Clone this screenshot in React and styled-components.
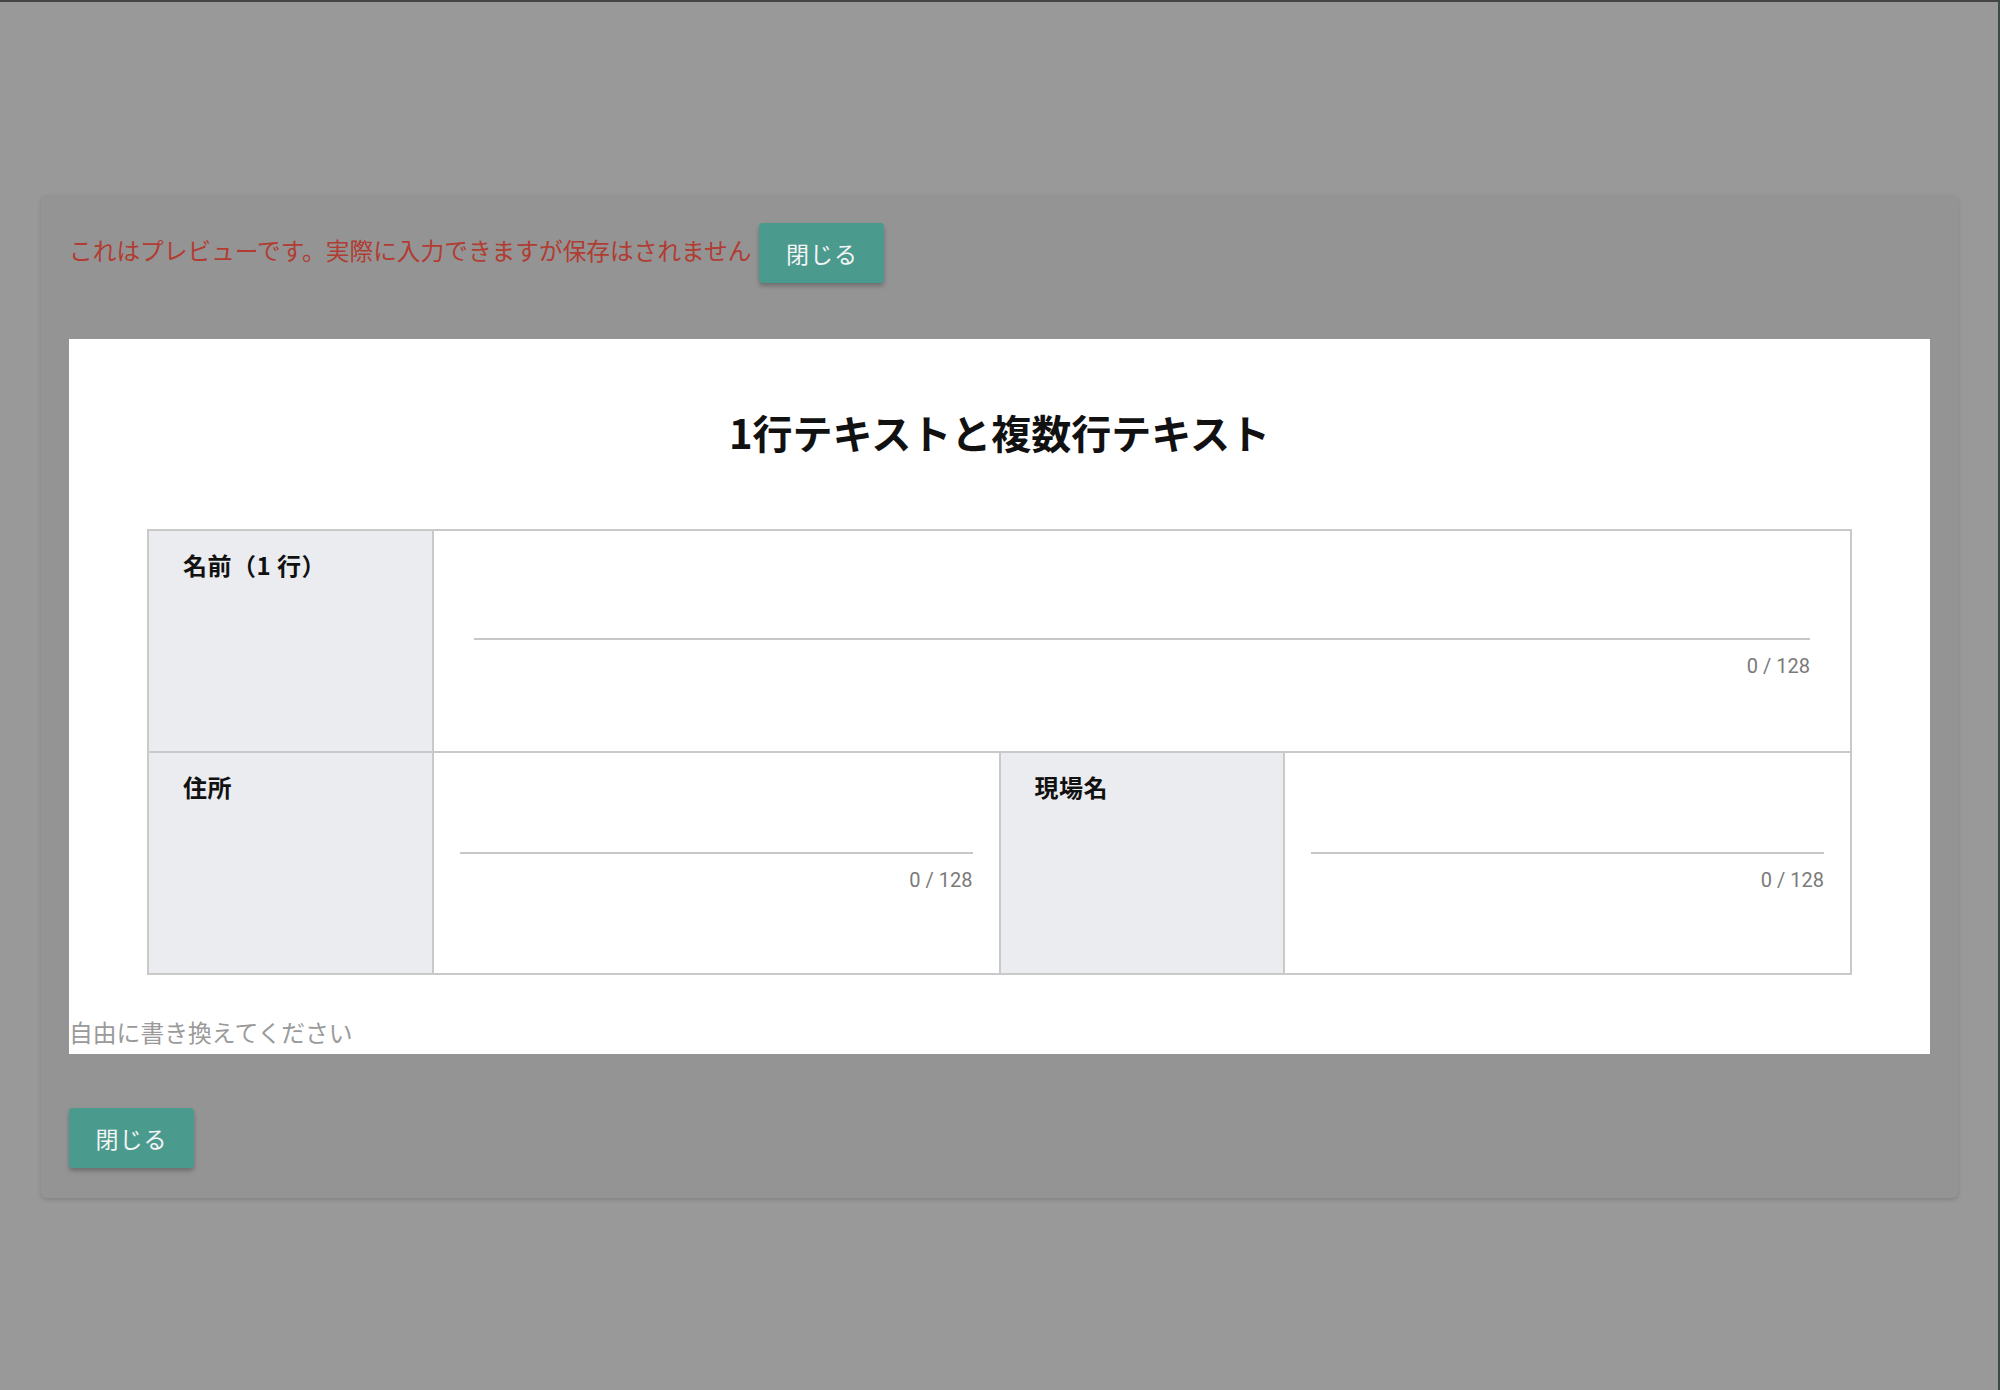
import React from "react";
import styled, { createGlobalStyle } from "styled-components";

const GlobalStyle = createGlobalStyle`
  html, body {
    margin: 0;
    padding: 0;
    background: #999999;
  }
  body {
    font-family: "Noto Sans CJK JP", "Noto Sans", sans-serif;
    border-top: 2px solid #444;
  }
`;

const Page = styled.div`
  min-height: 1388px;
  box-sizing: border-box;
  padding: 193px 40px 0 41px;
  border-right: 2px solid #3c4a4c;
`;

const Card = styled.div`
  background: #949494;
  border-radius: 6px;
  padding: 28px 28px 30px;
  box-shadow: 0 2px 4px rgba(0, 0, 0, 0.15);
`;

const NoticeRow = styled.div`
  display: flex;
  align-items: center;
  gap: 8px;
`;

const Notice = styled.span`
  color: #b13c32;
  font-size: 23.7px;
  line-height: 1.4;
  margin-top: -4px;
`;

const Button = styled.button`
  width: 125px;
  height: 60px;
  border: none;
  border-radius: 4px;
  background: #4a9a8e;
  color: #f4f4f4;
  font-family: "Noto Sans CJK JP", sans-serif;
  font-size: 23px;
  letter-spacing: 1px;
  cursor: pointer;
  box-shadow: 0 3px 4px rgba(0, 0, 0, 0.25);
  margin-top: ${(p) => p.$top || 0}px;
`;

const Panel = styled.div`
  margin-top: 56px;
  background: #ffffff;
  padding-bottom: 3px;
`;

const Title = styled.h1`
  margin: 0;
  padding-top: 63px;
  text-align: center;
  font-size: 40px;
  font-weight: 700;
  line-height: 60px;
  color: #111;
`;

const Table = styled.div`
  margin: 67px 78px 0;
  display: grid;
  grid-template-columns: 1fr 2fr 1fr 2fr;
  grid-auto-rows: 220px;
  gap: 2px;
  padding: 2px;
  background: #c9c9c9;
`;

const Label = styled.div`
  background: #ebecef;
  padding: 16px 34px;
  font-size: 24px;
  font-weight: 700;
  line-height: 36px;
  letter-spacing: 0.5px;
  color: #111;
`;

const Field = styled.div`
  grid-column: span ${(p) => p.$span || 1};
  background: #fff;
  padding: ${(p) => p.$top}px ${(p) => p.$side}px 0;
  display: flex;
  flex-direction: column;
`;

const Input = styled.input`
  height: 42px;
  box-sizing: border-box;
  border: none;
  border-bottom: 2px solid #c8c8c8;
  outline: none;
  font-family: "Noto Sans CJK JP", sans-serif;
  font-size: 24px;
  background: transparent;
`;

const Counter = styled.div`
  margin-top: 14px;
  text-align: right;
  font-family: Roboto, "Liberation Sans", sans-serif;
  font-size: 20px;
  line-height: 24px;
  color: #7a7a7a;
`;

const Footnote = styled.div`
  margin-top: 38px;
  font-size: 23.8px;
  line-height: 38px;
  color: #9a9a9a;
`;

const TextField = ({ span, top, side }) => (
  <Field $span={span} $top={top} $side={side}>
    <Input type="text" maxLength={128} />
    <Counter>0 / 128</Counter>
  </Field>
);

export default function App() {
  return (
    <>
      <GlobalStyle />
      <Page>
        <Card>
          <NoticeRow>
            <Notice>これはプレビューです。実際に入力できますが保存はされません</Notice>
            <Button>閉じる</Button>
          </NoticeRow>
          <Panel>
            <Title>1行テキストと複数行テキスト</Title>
            <Table>
              <Label>名前（1 行）</Label>
              <TextField span={3} top={67} side={40} />
              <Label>住所</Label>
              <TextField top={59} side={26} />
              <Label>現場名</Label>
              <TextField top={59} side={26} />
            </Table>
            <Footnote>自由に書き換えてください</Footnote>
          </Panel>
          <Button $top={54}>閉じる</Button>
        </Card>
      </Page>
    </>
  );
}
